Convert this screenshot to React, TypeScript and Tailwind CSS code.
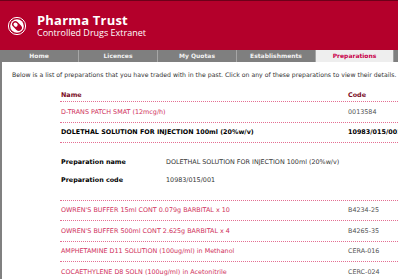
import React from 'react';

const tabs = ['Home', 'Licences', 'My Quotas', 'Establishments', 'Preparations'];

const rows = [
  { name: "OWREN'S BUFFER 15ml CONT 0.079g BARBITAL x 10", code: 'B4234-25' },
  { name: "OWREN'S BUFFER 500ml CONT 2.625g BARBITAL x 4", code: 'B4265-35' },
  { name: 'AMPHETAMINE D11 SOLUTION (100ug/ml) in Methanol', code: 'CERA-016' },
  { name: 'COCAETHYLENE D8 SOLN (100ug/ml) in Acetonitrile', code: 'CERC-024' },
];

const Logo = () => (
  <svg width="20" height="20" viewBox="0 0 20 20">
    <circle cx="10" cy="10" r="8.6" fill="none" stroke="#fff" strokeWidth="1" />
    <circle cx="10" cy="10" r="6.8" fill="#fff" />
    <g transform="rotate(45 10 10)">
      <rect x="4.4" y="6.8" width="11.2" height="6.4" rx="3.2" fill="#b4002b" />
      <rect x="5.8" y="8.2" width="4.4" height="3.6" rx="1.8" fill="#fff" />
    </g>
  </svg>
);

const Row = ({ name, code }: { name: string; code: string }) => (
  <div className="flex h-[20.5px] items-center border-b border-dotted border-[#e46f92]">
    <div className="w-[288px] shrink-0 pl-[1px] text-[#cf2f5b] whitespace-nowrap">{name}</div>
    <div className="text-[#555] whitespace-nowrap">{code}</div>
  </div>
);

export default function App() {
  return (
    <div className="w-[398px] h-[279px] overflow-hidden bg-white font-['DejaVu_Sans',sans-serif]">
      {/* Header */}
      <div className="h-[50px] bg-[#b4002b] border-t border-[#6d0019] flex items-center pl-[7px] gap-[10px]">
        <Logo />
        <div className="font-['Open_Sans',sans-serif] text-white">
          <div className="text-[13px] font-bold leading-[14px] tracking-[0.2px]">Pharma Trust</div>
          <div className="text-[9px] leading-[10px] mt-[1px]">Controlled Drugs Extranet</div>
        </div>
      </div>

      {/* Nav */}
      <div className="flex h-[12px] bg-[#7f7f7f] text-[6px] font-bold leading-none">
        {tabs.map((t) => (
          <div
            key={t}
            className={
              t === 'Preparations'
                ? 'w-[78px] flex items-center justify-center bg-[#eeeeee] text-[#c8004a] border-r border-[#a0a0a0]'
                : 'w-[79px] flex items-center justify-center text-[#f2f2f2] border-r border-[#a6a6a6]'
            }
          >
            {t}
          </div>
        ))}
      </div>

      {/* Body */}
      <div className="h-[217px] border-l-2 border-[#808080] text-[6.4px] leading-[8px]">
        <p className="pl-[10px] pt-[9px] text-[6.2px] text-[#333] whitespace-nowrap">
          Below is a list of preparations that you have traded with in the past. Click on any of these preparations to view their details.
        </p>

        <div className="ml-[58px] mt-[10px] w-[360px]">
          <div className="flex h-[13px] items-center border-b border-dotted border-[#e46f92] font-bold text-[#7a0a1e]">
            <div className="w-[288px] shrink-0 pl-[1px]">Name</div>
            <div>Code</div>
          </div>

          <Row name="D-TRANS PATCH SMAT (12mcg/h)" code="0013584" />

          <div className="flex h-[20px] items-center border-b border-dotted border-[#e46f92] font-bold text-black">
            <div className="w-[288px] shrink-0 pl-[1px] whitespace-nowrap">DOLETHAL SOLUTION FOR INJECTION 100ml (20%w/v)</div>
            <div className="whitespace-nowrap">10983/015/001</div>
          </div>

          <div className="flex flex-col gap-[10px] pt-[15px] pb-[16px] pl-[1px] border-b border-dotted border-[#e46f92]">
            <div className="flex">
              <div className="w-[105px] font-bold text-black">Preparation name</div>
              <div className="text-[#333] whitespace-nowrap">DOLETHAL SOLUTION FOR INJECTION 100ml (20%w/v)</div>
            </div>
            <div className="flex">
              <div className="w-[105px] font-bold text-black">Preparation code</div>
              <div className="text-[#333]">10983/015/001</div>
            </div>
          </div>

          {rows.map((r) => (
            <Row key={r.code} name={r.name} code={r.code} />
          ))}
        </div>
      </div>
    </div>
  );
}
